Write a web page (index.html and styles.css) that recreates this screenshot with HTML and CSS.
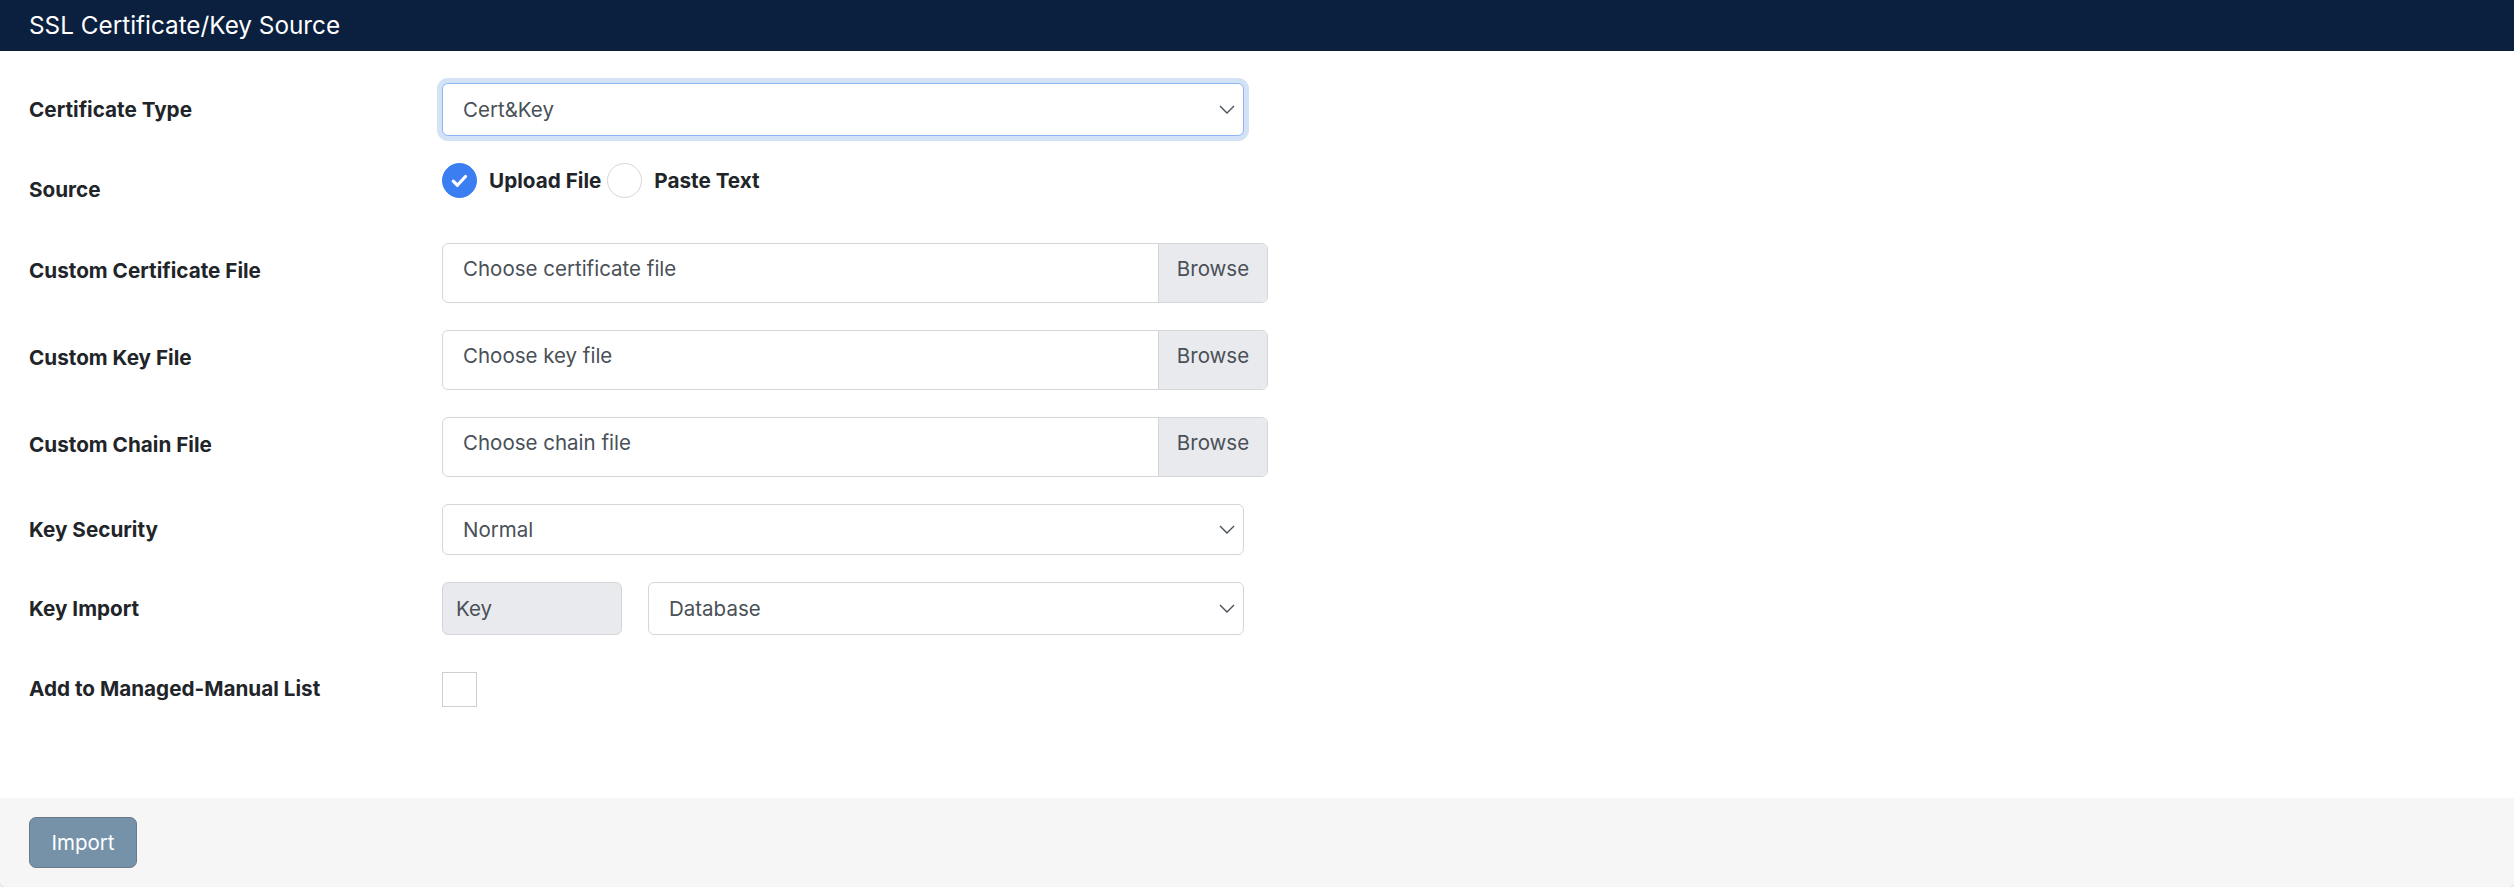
FILE: index.html
```html
<!DOCTYPE html>
<html lang="en">
<head>
    <meta charset="UTF-8">
    <meta name="viewport" content="width=device-width, initial-scale=1.0">
    <title>SSL Certificate/Key Source</title>
    <link rel="stylesheet" href="styles.css">
</head>
<body>
    <div class="panel">
        <!-- Panel header -->
        <div class="panel-head">SSL Certificate/Key Source</div>

        <form class="panel-body">
            <div class="form-row">
                <label class="form-label">Certificate Type</label>
                <div class="select select-focus select-wide">
                    <span>Cert&amp;Key</span>
                    <svg class="chevron" viewBox="0 0 16 9"><path d="M1 1l7 7 7-7"/></svg>
                </div>
            </div>

            <div class="form-row row-top">
                <label class="form-label">Source</label>
                <div class="radio-group">
                    <span class="radio radio-on">
                        <svg viewBox="0 0 20 20"><path d="M5 10.5l3.3 3.3 6.5-7"/></svg>
                    </span>
                    <span class="radio-text">Upload File</span>
                    <span class="radio"></span>
                    <span class="radio-text">Paste Text</span>
                </div>
            </div>

            <div class="form-row row-file">
                <label class="form-label">Custom Certificate File</label>
                <div class="file-input">
                    <span class="file-name">Choose certificate file</span>
                    <span class="file-btn">Browse</span>
                </div>
            </div>

            <div class="form-row row-file">
                <label class="form-label">Custom Key File</label>
                <div class="file-input">
                    <span class="file-name">Choose key file</span>
                    <span class="file-btn">Browse</span>
                </div>
            </div>

            <div class="form-row row-file">
                <label class="form-label">Custom Chain File</label>
                <div class="file-input">
                    <span class="file-name">Choose chain file</span>
                    <span class="file-btn">Browse</span>
                </div>
            </div>

            <div class="form-row">
                <label class="form-label">Key Security</label>
                <div class="select select-wide select-short">
                    <span>Normal</span>
                    <svg class="chevron" viewBox="0 0 16 9"><path d="M1 1l7 7 7-7"/></svg>
                </div>
            </div>

            <div class="form-row">
                <label class="form-label">Key Import</label>
                <div class="key-import">
                    <span class="addon">Key</span>
                    <div class="select select-db">
                        <span>Database</span>
                        <svg class="chevron" viewBox="0 0 16 9"><path d="M1 1l7 7 7-7"/></svg>
                    </div>
                </div>
            </div>

            <div class="form-row row-top">
                <label class="form-label">Add to Managed-Manual List</label>
                <span class="checkbox"></span>
            </div>
        </form>

        <!-- Footer with action -->
        <div class="panel-foot">
            <button type="button" class="btn-import">Import</button>
        </div>
    </div>
</body>
</html>
```

FILE: styles.css
```css
body {
    font-family: 'Inter', 'Noto Sans', sans-serif;
    background-color: #fff;
    color: #212529;
    margin: 0;
    padding: 0;
}

.panel {
    background: #fff;
    box-shadow: 0 2px 3px rgba(0, 0, 0, 0.18);
    border-radius: 0 0 6px 6px;
}

/* Header */
.panel-head {
    height: 51px;
    line-height: 51px;
    padding-left: 29px;
    background: #0b1f3f;
    color: #fff;
    font-size: 24.3px;
}

/* Form rows */
.panel-body {
    display: flex;
    flex-direction: column;
    gap: 27px;
    padding: 32px 29px 83px;
}

.form-row {
    display: flex;
    align-items: center;
}

.row-top {
    align-items: flex-start;
    height: 53px;
}

.row-top .form-label {
    align-self: center;
}

.row-file .form-label {
    padding-bottom: 6px;
}

.form-label {
    width: 413px;
    flex-shrink: 0;
    font-weight: 700;
    font-size: 20.7px;
    color: #212529;
}

.select {
    box-sizing: border-box;
    height: 53px;
    display: flex;
    align-items: center;
    justify-content: space-between;
    padding: 0 8px 0 20px;
    border: 1px solid #d4d6d9;
    border-radius: 6px;
    background: #fff;
    color: #495057;
    font-size: 20.5px;
}

.select-wide {
    width: 802px;
}

.select-short {
    height: 51px;
}

.select-focus {
    border-color: #8db6f2;
    box-shadow: 0 0 0 5px #d3e2f5;
}

.chevron {
    width: 16px;
    height: 9px;
    fill: none;
    stroke: #495057;
    stroke-width: 1.4;
}

/* Radio buttons */
.radio-group {
    display: flex;
    align-items: center;
}

.radio {
    box-sizing: border-box;
    width: 35px;
    height: 35px;
    border-radius: 50%;
    border: 1px solid #d7d7d7;
    background: #fff;
    display: flex;
    align-items: center;
    justify-content: center;
}

.radio-on {
    background: #3a7ef2;
    border-color: #3a7ef2;
}

.radio-on svg {
    width: 25px;
    height: 25px;
    fill: none;
    stroke: #fff;
    stroke-width: 2.6;
    stroke-linecap: round;
    stroke-linejoin: round;
}

.radio-text {
    font-weight: 700;
    font-size: 20.7px;
    margin: 0 6px 0 12px;
}

/* File inputs */
.file-input {
    box-sizing: border-box;
    width: 826px;
    height: 60px;
    display: flex;
    border: 1px solid #d4d6d9;
    border-radius: 6px;
    overflow: hidden;
    font-size: 20.5px;
    color: #495057;
}

.file-name {
    flex: 1;
    padding: 12px 20px 0;
}

.file-btn {
    width: 109px;
    box-sizing: border-box;
    padding-top: 12px;
    text-align: center;
    background: #e9eaee;
    border-left: 1px solid #d4d6d9;
}

/* Key import group */
.key-import {
    display: flex;
    gap: 26px;
}

.addon {
    box-sizing: border-box;
    width: 180px;
    height: 53px;
    display: flex;
    align-items: center;
    padding-left: 13px;
    background: #e9eaee;
    border: 1px solid #d4d6d9;
    border-radius: 6px;
    color: #495057;
    font-size: 20.5px;
}

.select-db {
    width: 596px;
}

.checkbox {
    box-sizing: border-box;
    width: 35px;
    height: 35px;
    margin-top: 10px;
    border: 1px solid #d0cfcf;
    background: #fff;
}

/* Footer */
.panel-foot {
    background: #f6f6f6;
    padding: 19px 29px 19px;
    border-radius: 0 0 6px 6px;
}

.btn-import {
    width: 108px;
    height: 51px;
    background: #7592a9;
    border: 1px solid #6a7a8a;
    border-radius: 7px;
    color: #fff;
    font-family: 'Inter', 'Noto Sans', sans-serif;
    font-size: 20.5px;
    cursor: pointer;
}
```
